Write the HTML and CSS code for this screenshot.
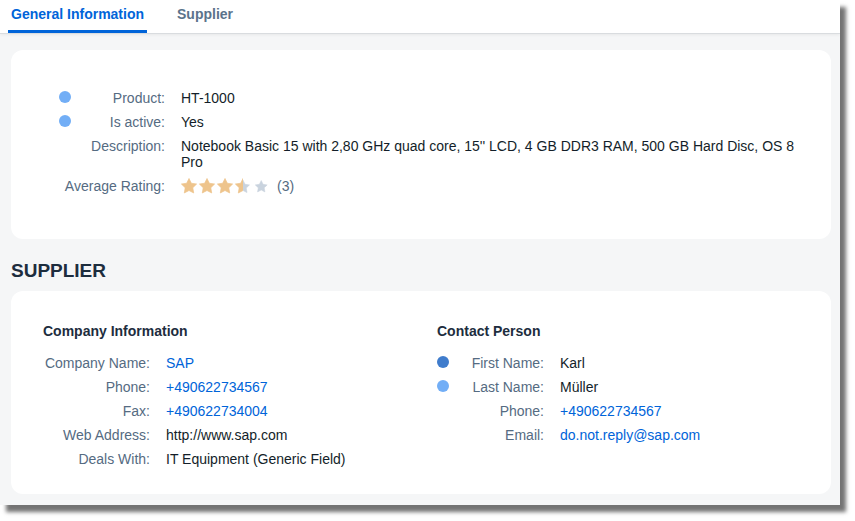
FILE: index.html
```html
<!DOCTYPE html>
<html>
<head>
<meta charset="utf-8">
<link rel="stylesheet" href="styles.css">
</head>
<body>
<div class="screen">
  <div class="tabbar">
    <div class="tab active">General Information</div>
    <div class="tab">Supplier</div>
  </div>
  <div class="content">
    <div class="card card-general">
      <div class="form form-general">
        <span class="dot light"></span><span class="label">Product:</span><span class="value">HT-1000</span>
        <span class="dot light"></span><span class="label">Is active:</span><span class="value">Yes</span>
        <span></span><span class="label">Description:</span><span class="value">Notebook Basic 15 with 2,80 GHz quad core, 15'' LCD, 4 GB DDR3 RAM, 500 GB Hard Disc, OS 8 Pro</span>
        <span></span><span class="label">Average Rating:</span>
        <span class="value rating">
          <svg class="stars" width="90" height="16" viewBox="0 0 90 16">
            <defs>
              <path id="big" d="M8 0.5 L10.35 5.26 L15.61 6.03 L11.8 9.74 L12.7 14.97 L8 12.5 L3.3 14.97 L4.2 9.74 L0.39 6.03 L5.65 5.26 Z"/>
              <clipPath id="lefthalf"><rect x="0" y="0" width="8" height="16"/></clipPath>
              <clipPath id="righthalf"><rect x="8" y="0" width="8" height="16"/></clipPath>
            </defs>
            <g fill="#eec48c" stroke="#eec48c" stroke-width="0.7" stroke-linejoin="round">
              <use href="#big" x="0"/>
              <use href="#big" x="18"/>
              <use href="#big" x="36"/>
            </g>
            <g transform="translate(54 0)" stroke-width="0.7" stroke-linejoin="round">
              <g clip-path="url(#righthalf)"><use href="#big" fill="#c9d3de" stroke="#c9d3de" transform="translate(1.2 1.8) scale(0.85)"/></g>
              <g clip-path="url(#lefthalf)"><use href="#big" fill="#eec48c" stroke="#eec48c"/></g>
            </g>
            <use href="#big" fill="#c9d3de" stroke="#c9d3de" stroke-width="0.7" stroke-linejoin="round" transform="translate(74 2.2) scale(0.78)"/>
          </svg>
          <span class="count">(3)</span>
        </span>
      </div>
    </div>

    <h2 class="section-title">SUPPLIER</h2>

    <div class="card card-supplier">
      <div class="group">
        <div class="group-title">Company Information</div>
        <div class="form form-company">
          <span class="label">Company Name:</span><span class="value link">SAP</span>
          <span class="label">Phone:</span><span class="value link">+490622734567</span>
          <span class="label">Fax:</span><span class="value link">+490622734004</span>
          <span class="label">Web Address:</span><span class="value">http://www.sap.com</span>
          <span class="label">Deals With:</span><span class="value">IT Equipment (Generic Field)</span>
        </div>
      </div>
      <div class="group">
        <div class="group-title">Contact Person</div>
        <div class="form form-contact">
          <span class="dot dark"></span><span class="label">First Name:</span><span class="value">Karl</span>
          <span class="dot light"></span><span class="label">Last Name:</span><span class="value">Müller</span>
          <span></span><span class="label">Phone:</span><span class="value link">+490622734567</span>
          <span></span><span class="label">Email:</span><span class="value link">do.not.reply@sap.com</span>
        </div>
      </div>
    </div>
  </div>
</div>
</body>
</html>
```

FILE: styles.css
```css
* { box-sizing: border-box; }

html, body {
  margin: 0;
  padding: 0;
  background: #ffffff;
}

body {
  width: 855px;
  height: 521px;
  overflow: hidden;
  font-family: "Liberation Sans", Arial, sans-serif;
  font-size: 14px;
  color: #131e29;
}

.screen {
  width: 840px;
  height: 505px;
  background: #f5f6f7;
  box-shadow: 6px 7px 4px rgba(0, 0, 0, 0.55);
  display: flex;
  flex-direction: column;
  overflow: hidden;
}

.tabbar {
  height: 34px;
  background: #ffffff;
  border-bottom: 1px solid #d9dcdf;
  box-shadow: 0 1px 3px rgba(0, 0, 0, 0.06);
  display: flex;
  gap: 27px;
  padding-left: 8px;
  flex-shrink: 0;
}

.tab {
  padding: 6px 3px 0;
  height: 33px;
  font-weight: bold;
  font-size: 14px;
  color: #5b738b;
  border-bottom: 3px solid transparent;
}

.tab.active {
  color: #0064d9;
  border-bottom-color: #0064d9;
}

.content {
  padding: 16px 9px 0 11px;
  display: flex;
  flex-direction: column;
}

.card {
  background: #ffffff;
  border-radius: 12px;
}

.card-general {
  height: 189px;
  padding: 40px 20px 0 48px;
}

.form {
  display: grid;
  row-gap: 8px;
  line-height: 16px;
  align-items: start;
}

.form-general {
  grid-template-columns: 12px 94px 631px;
  column-gap: 0;
}

.form-general .value,
.form-contact .value { margin-left: 16px; }

.label {
  color: #556b82;
  text-align: right;
  white-space: nowrap;
  justify-self: end;
}

.value { color: #131e29; }

.link { color: #0064d9; }

.dot {
  width: 12px;
  height: 12px;
  border-radius: 50%;
  margin-top: 1px;
}

.dot.light { background: #72aef6; }
.dot.dark { background: #3f7ccc; }

.rating {
  display: flex;
  align-items: center;
  gap: 6px;
}

.stars { display: block; }

.count { color: #556b82; }

.section-title {
  margin: 20px 0 8px;
  font-size: 19px;
  line-height: 24px;
  font-weight: bold;
  color: #1d2d3e;
}

.card-supplier {
  height: 203px;
  padding: 31px 32px 0 32px;
  display: grid;
  grid-template-columns: 378px 378px;
  column-gap: 16px;
}

.group-title {
  font-weight: bold;
  font-size: 14px;
  line-height: 18px;
  color: #1d2d3e;
  margin-bottom: 15px;
}

.form-company {
  grid-template-columns: 107px 1fr;
  column-gap: 16px;
}

.form-contact {
  grid-template-columns: 12px 95px 1fr;
}
```
